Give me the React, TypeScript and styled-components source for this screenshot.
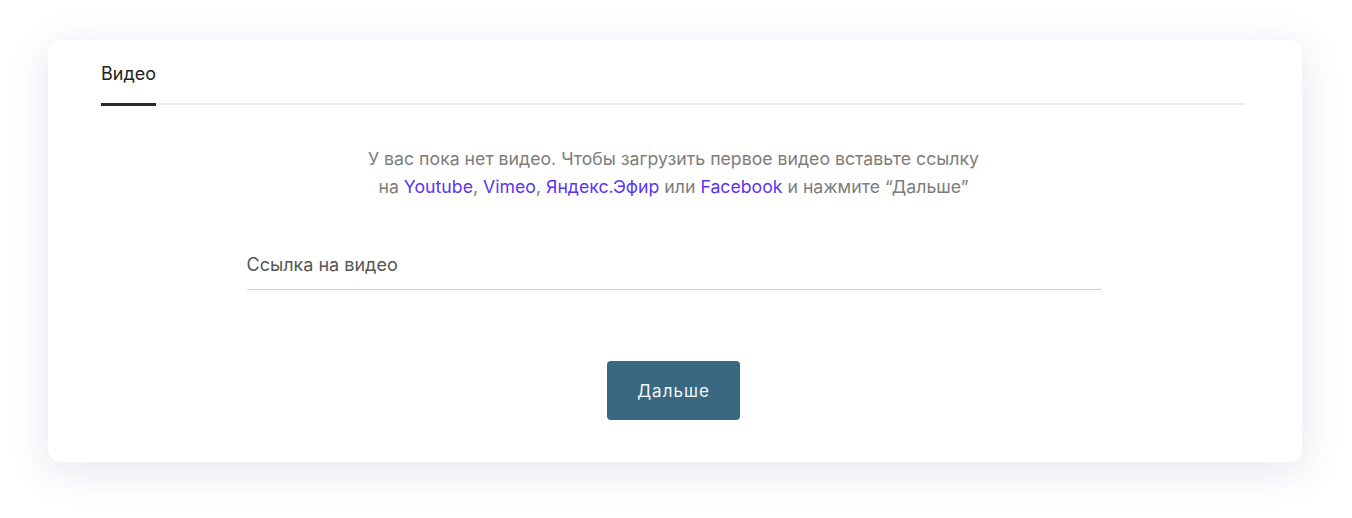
import React from 'react';
import styled, { createGlobalStyle } from 'styled-components';

const GlobalStyle = createGlobalStyle`
    body {
        margin: 0;
        background: #ffffff;
        font-family: Inter, "Noto Sans", sans-serif;
    }
`;

const Page = styled.div`
    padding: 40px 50px 56px 48px;
`;

const Card = styled.section`
    background: #ffffff;
    border-radius: 12px;
    box-shadow: 0 8px 40px rgba(70, 70, 140, 0.14);
    padding: 22px 56px 42px 53px;
    height: 422px;
    box-sizing: border-box;
    display: flex;
    flex-direction: column;
    align-items: center;
`;

const TabList = styled.div`
    align-self: stretch;
    display: flex;
    border-bottom: 2px solid #ececef;
    height: 41px;
`;

const Tab = styled.div<{ $active?: boolean }>`
    font-size: 18px;
    line-height: 24px;
    color: #222222;
    padding-bottom: 15px;
    height: 26px;
    border-bottom: 3px solid ${p => (p.$active ? '#2a2a2a' : 'transparent')};
    margin-bottom: -5px;
`;

const Intro = styled.p`
    margin: 40px 0 0;
    text-align: center;
    font-size: 17.7px;
    line-height: 28px;
    color: #7d7d7d;
`;

const Link = styled.a`
    color: #5b35f2;
    text-decoration: none;
`;

const Field = styled.input`
    margin-top: 49px;
    width: 854px;
    height: 40px;
    box-sizing: border-box;
    border: none;
    border-bottom: 1px solid #cfcfd4;
    outline: none;
    padding: 0 0 10px;
    font-family: inherit;
    font-size: 18px;
    color: #333;
    background: transparent;

    &::placeholder {
        color: #565656;
    }
`;

const NextButton = styled.button`
    margin-top: 71px;
    width: 133px;
    height: 59px;
    border: none;
    border-radius: 4px;
    background: #3a6880;
    color: #f4f7f9;
    font-family: inherit;
    font-size: 17px;
    letter-spacing: 1px;
    cursor: pointer;
`;

export default function App() {
    return (
        <Page>
            <GlobalStyle />
            <Card>
                <TabList>
                    <Tab $active>Видео</Tab>
                </TabList>
                <Intro>
                    У вас пока нет видео. Чтобы загрузить первое видео вставьте ссылку
                    <br />
                    на <Link href="#">Youtube</Link>, <Link href="#">Vimeo</Link>,{' '}
                    <Link href="#">Яндекс.Эфир</Link> или <Link href="#">Facebook</Link> и нажмите “Дальше”
                </Intro>
                <Field type="text" placeholder="Ссылка на видео" />
                <NextButton>Дальше</NextButton>
            </Card>
        </Page>
    );
}
